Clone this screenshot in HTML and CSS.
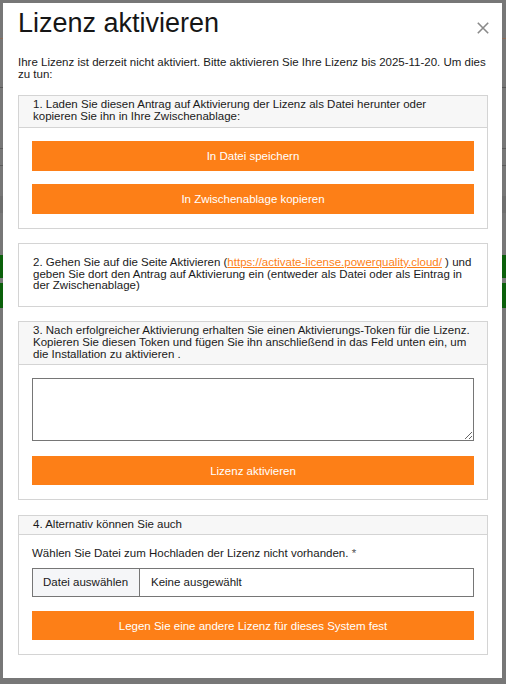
FILE: index.html
```html
<!DOCTYPE html>
<html lang="de">
<head>
<meta charset="utf-8">
<title>Lizenz aktivieren</title>
<link rel="stylesheet" href="styles.css">
</head>
<body>
<div class="modal">
  <div class="modal-head">
    <h1 class="title">Lizenz aktivieren</h1>
    <button class="close" aria-label="Schließen">
      <svg width="12" height="12" viewBox="0 0 12 12"><path d="M0.8 0.8 L11.2 11.2 M11.2 0.8 L0.8 11.2" stroke="#8a8a8a" stroke-width="1.6" fill="none"/></svg>
    </button>
  </div>
  <p class="intro">Ihre Lizenz ist derzeit nicht aktiviert. Bitte aktivieren Sie Ihre Lizenz bis 2025-11-20. Um dies<br>zu tun:</p>

  <section class="box">
    <div class="box-head">1. Laden Sie diesen Antrag auf Aktivierung der Lizenz als Datei herunter oder<br>kopieren Sie ihn in Ihre Zwischenablage:</div>
    <div class="box-body stack">
      <button class="btn btn-tall">In Datei speichern</button>
      <button class="btn btn-tall">In Zwischenablage kopieren</button>
    </div>
  </section>

  <section class="box">
    <div class="box-text">2. Gehen Sie auf die Seite Aktivieren (<a class="link" href="#">https://activate-license.powerquality.cloud/</a> ) und<br>geben Sie dort den Antrag auf Aktivierung ein (entweder als Datei oder als Eintrag in<br>der Zwischenablage)</div>
  </section>

  <section class="box">
    <div class="box-head">3. Nach erfolgreicher Aktivierung erhalten Sie einen Aktivierungs-Token für die Lizenz.<br>Kopieren Sie diesen Token und fügen Sie ihn anschließend in das Feld unten ein, um<br>die Installation zu aktivieren .</div>
    <div class="box-body">
      <textarea class="token"></textarea>
      <button class="btn">Lizenz aktivieren</button>
    </div>
  </section>

  <section class="box">
    <div class="box-head">4. Alternativ können Sie auch</div>
    <div class="box-body">
      <div class="field-label">Wählen Sie Datei zum Hochladen der Lizenz nicht vorhanden. <span class="req">*</span></div>
      <div class="file">
        <span class="file-btn">Datei auswählen</span>
        <span class="file-name">Keine ausgewählt</span>
      </div>
      <button class="btn btn-gap">Legen Sie eine andere Lizenz für dieses System fest</button>
    </div>
  </section>
</div>
</body>
</html>
```

FILE: styles.css
```css
html, body {
  margin: 0;
  padding: 0;
}
body {
  width: 506px;
  height: 684px;
  overflow: hidden;
  font-family: "Liberation Sans", Arial, sans-serif;
  color: #1a1a1a;
  background-color: #777;
  background-image: linear-gradient(to bottom,
    #777 0 38px, #8d6c58 38px 39px, #777 39px 87px, #575757 87px 88px,
    #777 88px 148px, #5c5c5c 148px 149px, #777 149px 165px, #5c5c5c 165px 166px,
    #777 166px 196px, #6f6f6f 196px 213px, #777 213px 255px,
    #0b600b 255px 278px, #7b7b7b 278px 283px, #0b600b 283px 308px, #777 308px);
}
.modal {
  box-sizing: border-box;
  width: 499px;
  height: 675px;
  margin: 3px;
  background: #fff;
  padding: 5px 14px 0 15px;
}
.modal-head {
  display: flex;
  justify-content: space-between;
  align-items: flex-start;
}
.title {
  margin: 0;
  font-size: 27px;
  line-height: 31px;
  font-weight: normal;
  color: #161616;
}
.close {
  margin: 13.7px -1px 0 0;
  padding: 0;
  border: 0;
  background: none;
  width: 12px;
  height: 12px;
  display: block;
}
.close svg { display: block; }
.intro {
  margin: 17px -6px 0 0;
  font-size: 11.5px;
  line-height: 12.4px;
  white-space: nowrap;
}
.box {
  border: 1px solid #d4d4d4;
  margin-top: 14.3px;
  font-size: 11.5px;
  line-height: 11.7px;
}
.box-head {
  background: #f7f7f7;
  border-bottom: 1px solid #d4d4d4;
  padding: 3px 10px 4px 14px;
  white-space: nowrap;
}
.box-text {
  padding: 13px 10px 14px 14px;
  white-space: nowrap;
}
.link {
  color: #fd7f17;
}
.box-body {
  padding: 13px 13px 14px;
}
.stack {
  display: flex;
  flex-direction: column;
  gap: 13px;
}
.btn {
  display: block;
  width: 100%;
  height: 29px;
  border: 0;
  padding: 0;
  background: #fd7f17;
  color: #fff;
  font-family: "Liberation Sans", Arial, sans-serif;
  font-size: 11.5px;
}
.btn-tall { height: 30px; }
.token {
  display: block;
  box-sizing: border-box;
  width: 100%;
  height: 63px;
  margin: 0 0 15px;
  border: 1px solid #767676;
  font-family: "Liberation Sans", Arial, sans-serif;
}
.field-label {
  margin-bottom: 8.4px;
}
.req { color: #555; }
.file {
  display: flex;
  box-sizing: border-box;
  height: 28.4px;
  border: 1px solid #767676;
  align-items: stretch;
}
.file-btn {
  display: flex;
  align-items: center;
  box-sizing: border-box;
  width: 107px;
  padding-left: 10px;
  background: #f5f6f8;
  border-right: 1px solid #767676;
}
.file-name {
  display: flex;
  align-items: center;
  padding-left: 11px;
}
.btn-gap { margin-top: 14.3px; }
```
